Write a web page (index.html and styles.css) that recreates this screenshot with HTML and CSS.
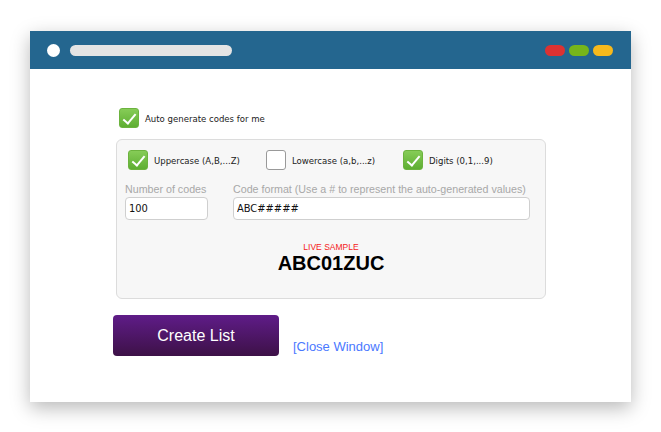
FILE: index.html
```html
<!DOCTYPE html>
<html lang="en">
<head>
    <meta charset="UTF-8">
    <meta name="viewport" content="width=device-width, initial-scale=1.0">
    <title>Generate Codes</title>
    <link rel="stylesheet" href="styles.css">
</head>
<body>
    <div class="window">
        <div class="titlebar">
            <span class="dot"></span>
            <span class="address"></span>
            <div class="lights">
                <span class="light red"></span>
                <span class="light green"></span>
                <span class="light yellow"></span>
            </div>
        </div>

        <div class="content">
            <label class="check auto-row">
                <span class="box checked"></span>
                Auto generate codes for me
            </label>

            <div class="panel">
                <div class="options">
                    <label class="check opt-upper">
                        <span class="box checked"></span>
                        Uppercase (A,B,...Z)
                    </label>
                    <label class="check opt-lower">
                        <span class="box"></span>
                        Lowercase (a,b,...z)
                    </label>
                    <label class="check">
                        <span class="box checked"></span>
                        Digits (0,1,...9)
                    </label>
                </div>

                <div class="fields">
                    <div class="field count">
                        <label for="count">Number of codes</label>
                        <input type="text" id="count" value="100">
                    </div>
                    <div class="field format">
                        <label for="format">Code format (Use a # to represent the auto-generated values)</label>
                        <input type="text" id="format" value="ABC#####">
                    </div>
                </div>

                <div class="sample">
                    <div class="sample-label">LIVE SAMPLE</div>
                    <div class="sample-code">ABC01ZUC</div>
                </div>
            </div>

            <div class="actions">
                <button type="button" class="create">Create List</button>
                <a href="#" class="close">[Close Window]</a>
            </div>
        </div>
    </div>
</body>
</html>
```

FILE: styles.css
```css
body {
    margin: 0;
    padding: 31px 30px;
    background: #fff;
    font-family: "Liberation Sans", Arial, sans-serif;
}

.window {
    width: 601px;
    height: 371px;
    background: #fff;
    box-shadow: 0 6px 18px rgba(0, 0, 0, 0.28);
    display: flex;
    flex-direction: column;
}

.titlebar {
    height: 38px;
    background: #24668f;
    display: flex;
    align-items: center;
    padding: 0 18px 0 17px;
}

.dot {
    width: 13px;
    height: 13px;
    border-radius: 50%;
    background: #fff;
}

.address {
    width: 162px;
    height: 11px;
    border-radius: 6px;
    background: #e4e4e4;
    margin-left: 10px;
}

.lights {
    margin-left: auto;
    display: flex;
    gap: 4px;
}

.light {
    width: 20px;
    height: 11px;
    border-radius: 6px;
}

.red { background: #dc3232; }
.green { background: #76b51a; }
.yellow { background: #f7b91c; }

.content {
    padding: 39px 0 0 86px;
}

.check {
    display: flex;
    align-items: center;
    font-family: "DejaVu Sans Condensed", "DejaVu Sans", Tahoma, sans-serif;
    font-size: 9.5px;
    color: #222;
}

.box {
    width: 18px;
    height: 18px;
    border: 1px solid #999;
    border-radius: 3px;
    background: #fff;
    margin-right: 6px;
    position: relative;
}

.box.checked {
    border-color: #6cb33e;
    background: linear-gradient(#86cc57, #5eae32);
}

.box.checked::after {
    content: "";
    position: absolute;
    left: 6px;
    top: 2px;
    width: 5px;
    height: 11px;
    border: solid #fff;
    border-width: 0 2px 2px 0;
    transform: rotate(40deg);
}

.auto-row {
    margin-left: 3px;
}

.panel {
    margin-top: 11px;
    width: 417px;
    height: 148px;
    border: 1px solid #dcdcdc;
    border-radius: 6px;
    background: #f7f7f7;
    padding: 10px 0 0 11px;
}

.options {
    display: flex;
}

.opt-upper {
    width: 138px;
}

.opt-lower {
    width: 137px;
}

.fields {
    display: flex;
    gap: 25px;
    margin-top: 13px;
    margin-left: -3px;
}

.field {
    display: flex;
    flex-direction: column;
}

.field label {
    font-size: 10.7px;
    color: #a8a8a8;
    margin-bottom: 2px;
}

.field input {
    height: 23px;
    box-sizing: border-box;
    border: 1px solid #cfcfcf;
    border-radius: 4px;
    background: #fff;
    padding: 0 3px;
    font-family: "DejaVu Sans Condensed", "DejaVu Sans", Tahoma, sans-serif;
    font-size: 11px;
    color: #111;
}

.count input {
    width: 83px;
}

.format input {
    width: 297px;
}

.sample {
    text-align: center;
    margin-top: 22px;
    margin-left: -11px;
}

.sample-label {
    font-size: 8.5px;
    color: #f51a1a;
}

.sample-code {
    font-size: 20px;
    font-weight: bold;
    color: #000;
    line-height: 22px;
}

.actions {
    display: flex;
    align-items: flex-end;
    margin-top: 16px;
    margin-left: -3px;
}

.create {
    width: 166px;
    height: 41px;
    border: none;
    border-radius: 4px;
    background: linear-gradient(#5f1c88, #3d1147);
    color: #fff;
    font-family: "Liberation Sans", Arial, sans-serif;
    font-size: 16px;
    cursor: pointer;
}

.close {
    margin-left: 14px;
    margin-bottom: 2px;
    font-size: 13px;
    color: #4a78ff;
    text-decoration: none;
}
```
